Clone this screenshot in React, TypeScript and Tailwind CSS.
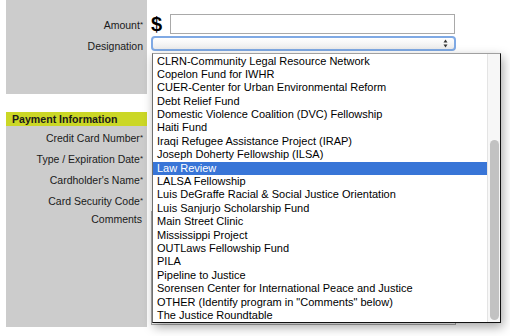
import React from 'react';

const programs = [
    'CLRN-Community Legal Resource Network',
    'Copelon Fund for IWHR',
    'CUER-Center for Urban Environmental Reform',
    'Debt Relief Fund',
    'Domestic Violence Coalition (DVC) Fellowship',
    'Haiti Fund',
    'Iraqi Refugee Assistance Project (IRAP)',
    'Joseph Doherty Fellowship (ILSA)',
    'Law Review',
    'LALSA Fellowship',
    'Luis DeGraffe Racial & Social Justice Orientation',
    'Luis Sanjurjo Scholarship Fund',
    'Main Street Clinic',
    'Mississippi Project',
    'OUTLaws Fellowship Fund',
    'PILA',
    'Pipeline to Justice',
    'Sorensen Center for International Peace and Justice',
    'OTHER (Identify program in "Comments" below)',
    'The Justice Roundtable',
];

const Req: React.FC = () => <span className="text-[8px] align-top relative top-[-1px]">*</span>;

const App: React.FC = () => {
    return (
        <div className="relative w-[510px] h-[336px] overflow-hidden bg-white text-[#1a1a1a] font-['Liberation_Sans',Arial,sans-serif]">
            {/* donation block */}
            <div className="flex h-[94px] pl-[6px]">
                <div className="w-[141px] bg-[#cccccc] pt-[15px] pr-[4px] text-right text-[10.5px]">
                    <div className="h-[21px] leading-[21px]">Amount<Req /></div>
                    <div className="h-[17px] leading-[21px]">Designation</div>
                </div>
                <div className="pt-[14px] pl-[4px]">
                    <div className="flex h-[21px] items-start">
                        <span className="w-[19px] text-[20px] font-bold leading-[20px] text-black">$</span>
                        <input type="text" className="w-[285px] h-[20px] border border-[#a9a9a9] bg-white" />
                    </div>
                    <div className="h-[17px] pt-[1px]">
                        <div className="relative w-[305px] h-[15px] rounded-[4px] border-2 border-[#7fa9e4] bg-gradient-to-b from-white to-[#ececec]">
                            <svg className="absolute right-[6px] top-[1px]" width="5" height="9" viewBox="0 0 5 9">
                                <path d="M2.5 0.5 L4.5 3.5 L0.5 3.5 Z" fill="#333" />
                                <path d="M2.5 8.5 L4.5 5.5 L0.5 5.5 Z" fill="#333" />
                            </svg>
                        </div>
                    </div>
                </div>
            </div>

            <div className="h-[18px]" />

            {/* payment block */}
            <div className="pl-[6px]">
                <div className="w-[141px] h-[14px] bg-[#cbd726] pl-[6px] text-[10.6px] font-bold leading-[14px]">
                    Payment Information
                </div>
                <div className="flex">
                    <div className="w-[141px] h-[201px] bg-[#cccccc] pt-[2px] pr-[4px] text-right text-[10.5px]">
                        <div className="h-[21px] leading-[21px]">Credit Card Number<Req /></div>
                        <div className="h-[21px] leading-[21px]">Type / Expiration Date<Req /></div>
                        <div className="h-[21px] leading-[21px]">Cardholder's Name<Req /></div>
                        <div className="h-[20px] leading-[21px]">Card Security Code<Req /></div>
                        <div className="h-[16px] leading-[16px] pr-[1px]">Comments</div>
                    </div>
                    <div className="pt-[85px] pl-[4px]">
                        <div className="relative w-[305px] h-[114px] border border-[#a9a9a9] bg-white">
                            <svg className="absolute right-[1px] bottom-[1px]" width="9" height="9" viewBox="0 0 9 9">
                                <path d="M8 2 L2 8 M8 5 L5 8" stroke="#999" strokeWidth="1" />
                            </svg>
                        </div>
                    </div>
                </div>
            </div>

            {/* open designation menu */}
            <div className="absolute left-[152px] top-[53px] w-[349px] h-[270px] flex bg-white border-t border-l border-t-[#a0a0a0] border-l-[#707070] border-r border-b border-r-[#111] border-b-[#111] shadow-[2px_4px_10px_rgba(0,0,0,0.35)]">
                <ul className="w-[334px] pt-[0.5px] text-[11px]">
                    {programs.map((p) => (
                        <li
                            key={p}
                            className={
                                p === 'Law Review'
                                    ? 'h-[13.4px] leading-[13.4px] px-[4px] whitespace-nowrap bg-[#3875d7] text-white'
                                    : 'h-[13.4px] leading-[13.4px] px-[4px] whitespace-nowrap text-black'
                            }
                        >
                            {p}
                        </li>
                    ))}
                </ul>
                <div className="w-[13px] bg-[#f7f7f7] border-l border-[#e4e4e4] pt-[86px] pl-[2px]">
                    <div className="w-[9px] h-[180px] rounded-full bg-[#c2c2c2]" />
                </div>
            </div>
        </div>
    );
};

export default App;
